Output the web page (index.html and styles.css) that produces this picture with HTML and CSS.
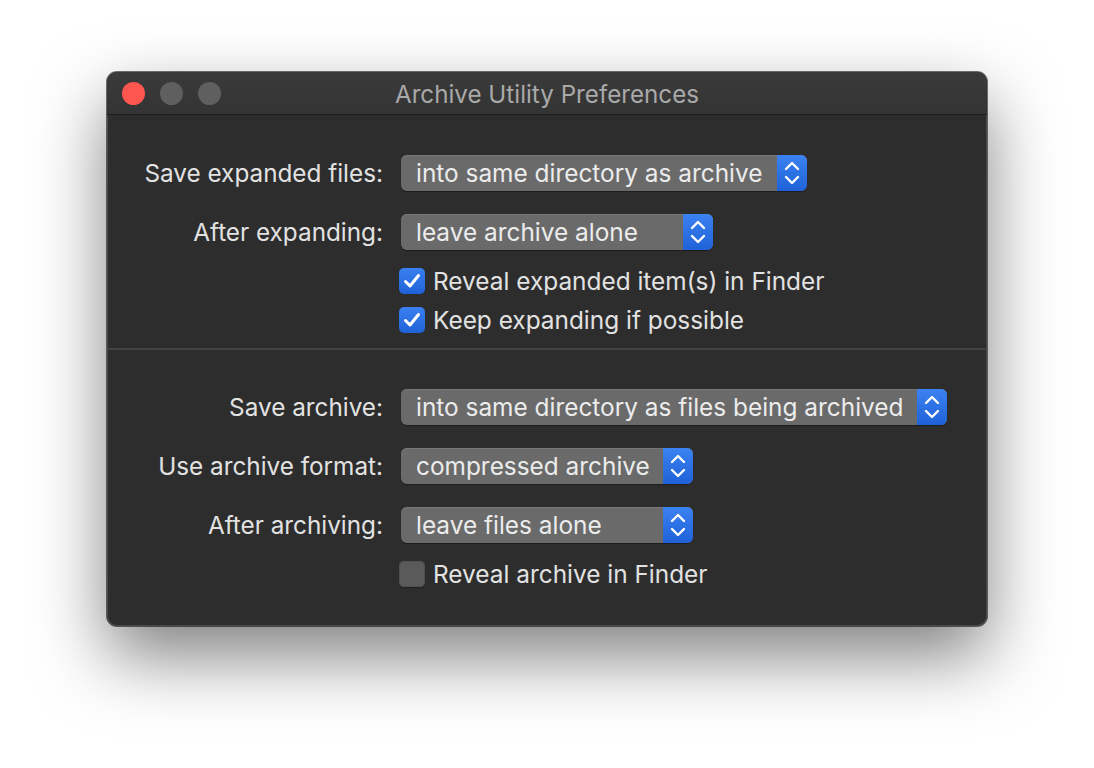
FILE: index.html
```html
<!DOCTYPE html>
<html lang="en">
<head>
  <meta charset="UTF-8">
  <title>Archive Utility Preferences</title>
  <link rel="stylesheet" href="styles.css">
</head>
<body>
  <div class="window">
    <div class="titlebar">
      <div class="lights">
        <span class="light close"></span>
        <span class="light"></span>
        <span class="light"></span>
      </div>
      <div class="title">Archive Utility Preferences</div>
    </div>

    <div class="pane">
      <div class="row">
        <label class="label">Save expanded files:</label>
        <div class="popup w-406">
          <span class="value">into same directory as archive</span>
          <span class="stepper"><svg viewBox="0 0 30 36"><path d="M9 14 L15 8 L21 14 M9 22 L15 28 L21 22"/></svg></span>
        </div>
      </div>
      <div class="row">
        <label class="label">After expanding:</label>
        <div class="popup w-312">
          <span class="value">leave archive alone</span>
          <span class="stepper"><svg viewBox="0 0 30 36"><path d="M9 14 L15 8 L21 14 M9 22 L15 28 L21 22"/></svg></span>
        </div>
      </div>
      <div class="checks">
        <div class="check">
          <span class="box on"><svg viewBox="0 0 26 26"><path d="M6.5 13.5 L11 18 L19.5 7.5"/></svg></span>
          <span>Reveal expanded item(s) in Finder</span>
        </div>
        <div class="check">
          <span class="box on"><svg viewBox="0 0 26 26"><path d="M6.5 13.5 L11 18 L19.5 7.5"/></svg></span>
          <span>Keep expanding if possible</span>
        </div>
      </div>
    </div>

    <div class="separator"></div>

    <div class="pane pane-bottom">
      <div class="row">
        <label class="label">Save archive:</label>
        <div class="popup w-546">
          <span class="value">into same directory as files being archived</span>
          <span class="stepper"><svg viewBox="0 0 30 36"><path d="M9 14 L15 8 L21 14 M9 22 L15 28 L21 22"/></svg></span>
        </div>
      </div>
      <div class="row">
        <label class="label">Use archive format:</label>
        <div class="popup w-292">
          <span class="value">compressed archive</span>
          <span class="stepper"><svg viewBox="0 0 30 36"><path d="M9 14 L15 8 L21 14 M9 22 L15 28 L21 22"/></svg></span>
        </div>
      </div>
      <div class="row">
        <label class="label">After archiving:</label>
        <div class="popup w-292">
          <span class="value">leave files alone</span>
          <span class="stepper"><svg viewBox="0 0 30 36"><path d="M9 14 L15 8 L21 14 M9 22 L15 28 L21 22"/></svg></span>
        </div>
      </div>
      <div class="checks">
        <div class="check">
          <span class="box"></span>
          <span>Reveal archive in Finder</span>
        </div>
      </div>
    </div>
  </div>
</body>
</html>
```

FILE: styles.css
```css
* {
  margin: 0;
  padding: 0;
  box-sizing: border-box;
}

html,
body {
  min-height: 768px;
}

body {
  background: #ffffff;
  padding: 72px 0 0 107px;
  font-family: Inter, 'Noto Sans', sans-serif;
  color: #e2e2e2;
}

.window {
  width: 880px;
  height: 554px;
  background: #2d2d2d;
  border-radius: 10px;
  overflow: hidden;
  box-shadow:
    0 0 0 1px rgba(0, 0, 0, 0.55),
    inset 0 0 0 1px #4a4a4a,
    0 30px 70px rgba(0, 0, 0, 0.5);
}

.titlebar {
  position: relative;
  height: 43px;
  background: linear-gradient(#3a3a3a, #343434);
  border-bottom: 1px solid #1c1c1c;
  display: flex;
  align-items: center;
  justify-content: center;
}

.lights {
  position: absolute;
  left: 15px;
  top: 10px;
  display: flex;
  gap: 15px;
}

.light {
  width: 23px;
  height: 23px;
  border-radius: 50%;
  background: #5f5f5f;
}

.light.close {
  background: #fd5650;
}

.title {
  font-size: 24.2px;
  color: #a9a9a9;
  padding-top: 3px;
}

.pane {
  padding: 40px 0 15px;
  display: flex;
  flex-direction: column;
  gap: 23px;
}

.pane-bottom {
  padding-top: 39px;
}

.row {
  display: flex;
  align-items: center;
  height: 36px;
}

.label {
  width: 276px;
  text-align: right;
  font-size: 24.3px;
  margin-right: 18px;
}

.popup {
  display: flex;
  height: 36px;
  border-radius: 6px;
  background: #6a6a6a;
  box-shadow: 0 1px 1px rgba(0, 0, 0, 0.35), inset 0 1px 0 #777;
  overflow: hidden;
}

.w-406 { width: 406px; }
.w-312 { width: 312px; }
.w-546 { width: 546px; }
.w-292 { width: 292px; }

.popup .value {
  flex: 1;
  padding-left: 15px;
  font-size: 24.4px;
  line-height: 36px;
  color: #ececec;
  white-space: nowrap;
}

.stepper {
  width: 30px;
  height: 36px;
  background: linear-gradient(#3b82f2, #1f62d8);
}

.stepper svg {
  width: 30px;
  height: 36px;
  display: block;
}

.stepper path,
.box path {
  fill: none;
  stroke: #ffffff;
  stroke-width: 2.4;
  stroke-linecap: round;
  stroke-linejoin: round;
}

.checks {
  display: flex;
  flex-direction: column;
  gap: 13px;
  margin-top: -5px;
}

.check {
  display: flex;
  align-items: center;
  height: 26px;
  padding-left: 292px;
  font-size: 24.4px;
}

.box {
  width: 26px;
  height: 26px;
  border-radius: 5px;
  background: #5a5a5a;
  box-shadow: inset 0 0 0 1px #505050, 0 1px 1px rgba(0, 0, 0, 0.3);
  margin-right: 8px;
}

.box.on {
  background: linear-gradient(#3a80f0, #1f62d8);
  box-shadow: none;
}

.box svg {
  width: 26px;
  height: 26px;
  display: block;
}

.box path {
  stroke-width: 3;
}

.separator {
  height: 2px;
  background: #434343;
}
```
